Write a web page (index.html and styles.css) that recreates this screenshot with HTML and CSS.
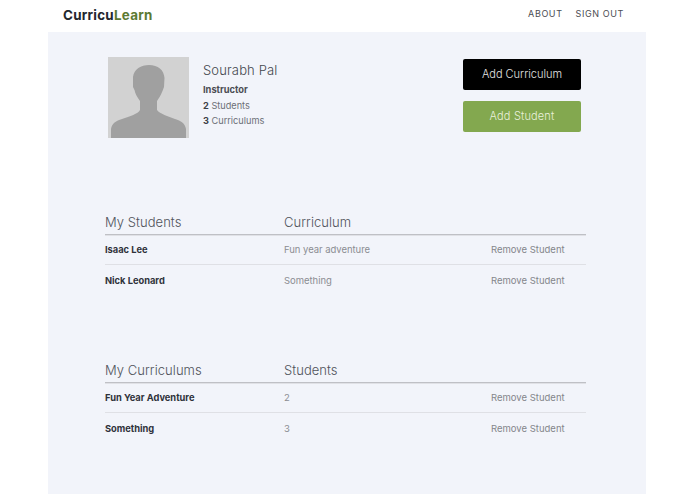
FILE: index.html
```html
<!DOCTYPE html>
<html lang="en">
<head>
<meta charset="utf-8">
<title>CurricuLearn</title>
<link rel="stylesheet" href="styles.css">
</head>
<body>
<header class="topbar">
  <div class="logo">Curricu<span class="logo-accent">Learn</span></div>
  <nav class="nav"><a>ABOUT</a><a>SIGN OUT</a></nav>
</header>
<main class="main">
  <section class="profile">
    <div class="avatar">
      <svg viewBox="0 0 81 81" width="81" height="81" aria-hidden="true">
        <rect width="81" height="81" fill="#d2d2d2"/>
        <path fill="#a0a0a0" d="M3 81V72C4 66 8 64 14 62C22 59 30 57 32 53V44C29 40 27 36 26.500 33L25 30V20C26 12 33 8 41 8C50 8 56 13 56.500 21L56 30L54.500 34C53 38 51 41 49 44V53C52 57 60 59 67 62C73 64 77 66 78 72V81Z"/>
      </svg>
    </div>
    <div class="info">
      <div class="name">Sourabh Pal</div>
      <div class="role">Instructor</div>
      <div class="stat"><b>2</b> Students</div>
      <div class="stat"><b>3</b> Curriculums</div>
    </div>
    <div class="actions">
      <button class="btn btn-black">Add Curriculum</button>
      <button class="btn btn-green">Add Student</button>
    </div>
  </section>
  <section class="list list-students">
    <div class="row head"><span>My Students</span><span>Curriculum</span></div>
    <div class="row"><strong>Isaac Lee</strong><span>Fun year adventure</span><a>Remove Student</a></div>
    <div class="row"><strong>Nick Leonard</strong><span>Something</span><a>Remove Student</a></div>
  </section>
  <section class="list list-curriculums">
    <div class="row head"><span>My Curriculums</span><span>Students</span></div>
    <div class="row"><strong>Fun Year Adventure</strong><span>2</span><a>Remove Student</a></div>
    <div class="row"><strong>Something</strong><span>3</span><a>Remove Student</a></div>
  </section>
</main>
</body>
</html>
```
FILE: styles.css
```css
* { box-sizing: border-box; }
html, body { margin: 0; height: 100%; overflow: hidden; }
body { background: #fff; font-family: Inter, "Liberation Sans", sans-serif; color: #3c3f47; }
.topbar { height: 32px; display: flex; align-items: center; justify-content: space-between; padding: 0 71px 3px 63px; }
.logo { font-size: 13.400px; font-weight: 700; letter-spacing: .25px; color: #23272e; }
.logo-accent { color: #5c7a33; }
.nav { display: flex; gap: 13px; margin-bottom: 2px; font-size: 9px; letter-spacing: .6px; color: #4b4d52; }
.main { width: 598px; height: 462px; margin-left: 48px; background: #f2f4fa; padding: 25px 60px 0 57px; }
.profile { display: flex; height: 81px; padding-left: 3px; }
.avatar { width: 81px; height: 81px; flex: none; }
.avatar svg { display: block; }
.info { margin-left: 14px; flex: 1; padding-top: 5px; }
.name { font-size: 13px; line-height: 17px; font-weight: 300; color: #44474d; letter-spacing: .15px; margin-bottom: 3px; }
.role { font-size: 9.300px; font-weight: 700; line-height: 16px; color: #4b4d53; }
.stat { font-size: 9.200px; line-height: 15px; color: #6c6f76; }
.stat b { color: #3c3f47; }
.actions { width: 118px; margin-right: 5px; margin-top: 2px; display: flex; flex-direction: column; gap: 11px; }
.btn { height: 31px; border: 0; border-radius: 2px; padding: 0 0 2px; font: 300 11px Inter, "Liberation Sans", sans-serif; }
.btn-black { background: #000; color: #e4e4e4; }
.btn-green { background: #83a84f; color: #e9f0dd; letter-spacing: .15px; }
.list { width: 481px; }
.list-students { margin-top: 73px; }
.list-curriculums { margin-top: 64px; }
.row { display: grid; grid-template-columns: 179px 207px 1fr; height: 30px; align-items: center; font-size: 9.500px; color: #8b8d92; border-bottom: 1px solid #dfe0e5; }
.row:last-child { border-bottom: 0; }
.row strong { color: #2f323a; font-size: 9.300px; font-weight: 700; }
.row span { letter-spacing: -.04px; }
.row a { color: #84868b; }
.head { height: 24px; padding-bottom: 2px; font-size: 13px; font-weight: 300; color: #50535a; border-bottom: 1px solid #bfc0c5; box-shadow: 0 1px 0 #e0e1e6; }
.head span { letter-spacing: .05px; }
```
